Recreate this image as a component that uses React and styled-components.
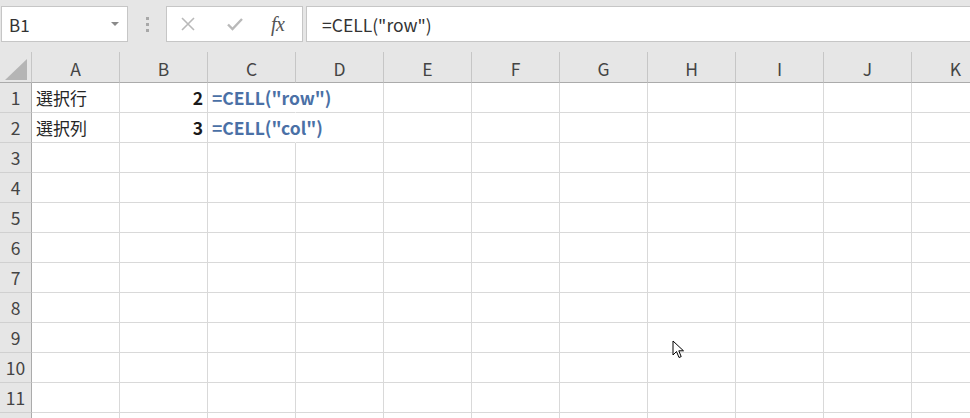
import React from "react";
import styled, { createGlobalStyle } from "styled-components";

const Global = createGlobalStyle`
  html, body {
    margin: 0;
    padding: 0;
    overflow: hidden;
    background: #ffffff;
  }
  body {
    font-family: "Noto Sans CJK JP", "Noto Sans", sans-serif;
  }
`;

const COLS = ["A", "B", "C", "D", "E", "F", "G", "H", "I", "J", "K"];
const ROW_COUNT = 12;

const Window = styled.div`
  position: relative;
  width: 970px;
  height: 418px;
  overflow: hidden;
  background: #ffffff;
`;

const Toolbar = styled.div`
  height: 52px;
  background: #e6e6e6;
  display: flex;
  align-items: flex-start;
  padding-top: 6px;
  box-sizing: border-box;
`;

const NameBox = styled.div`
  margin-left: 1px;
  width: 127px;
  height: 36px;
  box-sizing: border-box;
  background: #fff;
  border: 1px solid #c6c6c6;
  display: flex;
  align-items: center;
  justify-content: space-between;
  padding: 0 8px 0 7px;
  font-size: 17px;
  color: #333;
`;

const DropArrow = styled.span`
  width: 0;
  height: 0;
  border-left: 4px solid transparent;
  border-right: 4px solid transparent;
  border-top: 4px solid #8a8a8a;
`;

const Grip = styled.div`
  width: 38px;
  height: 36px;
  display: flex;
  flex-direction: column;
  align-items: center;
  justify-content: center;
  gap: 3px;
  span {
    width: 3px;
    height: 3px;
    background: #a8a8a8;
  }
`;

const ActionBox = styled.div`
  width: 137px;
  height: 36px;
  box-sizing: border-box;
  background: #fff;
  border: 1px solid #c6c6c6;
  display: flex;
  align-items: center;
  padding-left: 13px;
`;

const ActionSlot = styled.div`
  width: ${(p) => p.$w}px;
  padding-left: ${(p) => p.$pad || 0}px;
  display: flex;
  align-items: center;
`;

const Fx = styled.span`
  font-family: "Liberation Serif", "DejaVu Serif", serif;
  font-style: italic;
  font-size: 20px;
  color: #555;
  letter-spacing: -0.5px;
  line-height: 1;
`;

const FormulaInput = styled.div`
  margin-left: 3px;
  flex: 1;
  height: 36px;
  box-sizing: border-box;
  background: #fff;
  border: 1px solid #c6c6c6;
  border-right: none;
  display: flex;
  align-items: center;
  padding-left: 15px;
  font-size: 17.5px;
  color: #333;
`;

const Sheet = styled.div`
  display: grid;
  grid-template-columns: 32px repeat(${COLS.length}, 88px);
  grid-template-rows: 31px;
  grid-auto-rows: 30px;
  width: max-content;
  background: #fff;
`;

const Corner = styled.div`
  background: #e6e6e6;
  border-right: 1px solid #c6c6c6;
  border-bottom: 1px solid #ababab;
  display: flex;
  align-items: flex-end;
  justify-content: flex-end;
  padding: 0 4px 2px 0;
  box-sizing: border-box;
`;

const ColHead = styled.div`
  background: #e6e6e6;
  border-right: 1px solid #c6c6c6;
  border-bottom: 1px solid #ababab;
  display: flex;
  align-items: center;
  justify-content: center;
  font-size: 17.5px;
  color: #444;
  box-sizing: border-box;
  padding-top: 2px;
`;

const RowHead = styled.div`
  background: #e6e6e6;
  border-right: 1px solid #ababab;
  border-bottom: 1px solid #d0d0d0;
  display: flex;
  align-items: center;
  justify-content: center;
  font-size: 17.5px;
  color: #444;
  box-sizing: border-box;
`;

/* cells stay transparent so text spilling into the next column isn't covered */
const Cell = styled.div`
  border-right: 1px solid ${(p) => (p.$open ? "#fff" : "#d9d9d9")};
  border-bottom: 1px solid #d9d9d9;
  box-sizing: border-box;
  display: flex;
  align-items: center;
  justify-content: ${(p) => (p.$align === "right" ? "flex-end" : "flex-start")};
  padding: 0 4px;
  white-space: nowrap;
  font-size: ${(p) => (p.$bold ? "17.5px" : "17px")};
  font-weight: ${(p) => (p.$bold ? 700 : 400)};
  color: ${(p) => p.$color || "#262626"};
  min-width: 0;
`;

const Pointer = styled.svg`
  position: absolute;
  left: 672px;
  top: 340px;
`;

const cells = {
  "1A": { text: "選択行" },
  "1B": { text: "2", align: "right", bold: true, color: "#1a1a1a" },
  "1C": { text: '=CELL("row")', bold: true, color: "#4a70a6", open: true },
  "2A": { text: "選択列" },
  "2B": { text: "3", align: "right", bold: true, color: "#1a1a1a" },
  "2C": { text: '=CELL("col")', bold: true, color: "#4a70a6", open: true },
};

export default function App() {
  const rows = Array.from({ length: ROW_COUNT }, (_, i) => i + 1);
  return (
    <Window>
      <Global />
      <Toolbar>
        <NameBox>
          <span>B1</span>
          <DropArrow />
        </NameBox>
        <Grip>
          <span />
          <span />
          <span />
        </Grip>
        <ActionBox>
          <ActionSlot $w={46}>
            <svg width="16" height="16" viewBox="0 0 16 16">
              <path d="M2 2 L14 14 M14 2 L2 14" stroke="#b9b9b9" strokeWidth="1.6" fill="none" />
            </svg>
          </ActionSlot>
          <ActionSlot $w={44}>
            <svg width="18" height="16" viewBox="0 0 18 16">
              <path d="M2 8.5 L6.5 13 L16 3" stroke="#b9b9b9" strokeWidth="2.4" fill="none" />
            </svg>
          </ActionSlot>
          <ActionSlot $w={30} $pad={1}>
            <Fx>fx</Fx>
          </ActionSlot>
        </ActionBox>
        <FormulaInput>=CELL("row")</FormulaInput>
      </Toolbar>
      <Sheet>
        <Corner>
          <svg width="22" height="21" viewBox="0 0 22 21">
            <polygon points="0,21 22,21 22,0" fill="#b5b5b5" />
          </svg>
        </Corner>
        {COLS.map((c) => (
          <ColHead key={c}>{c}</ColHead>
        ))}
        {rows.map((r) => (
          <React.Fragment key={r}>
            <RowHead>{r}</RowHead>
            {COLS.map((c) => {
              const d = cells[`${r}${c}`] || {};
              return (
                <Cell
                  key={c}
                  $align={d.align}
                  $bold={d.bold}
                  $color={d.color}
                  $open={d.open}
                >
                  {d.text}
                </Cell>
              );
            })}
          </React.Fragment>
        ))}
      </Sheet>
      <Pointer width="13" height="20" viewBox="0 0 13 20">
        <path
          d="M1 1 L1 15 L4.5 11.5 L7 17.5 L9.2 16.6 L6.8 10.8 L11.5 10.8 Z"
          fill="#fff"
          stroke="#000"
          strokeWidth="1"
        />
      </Pointer>
    </Window>
  );
}
